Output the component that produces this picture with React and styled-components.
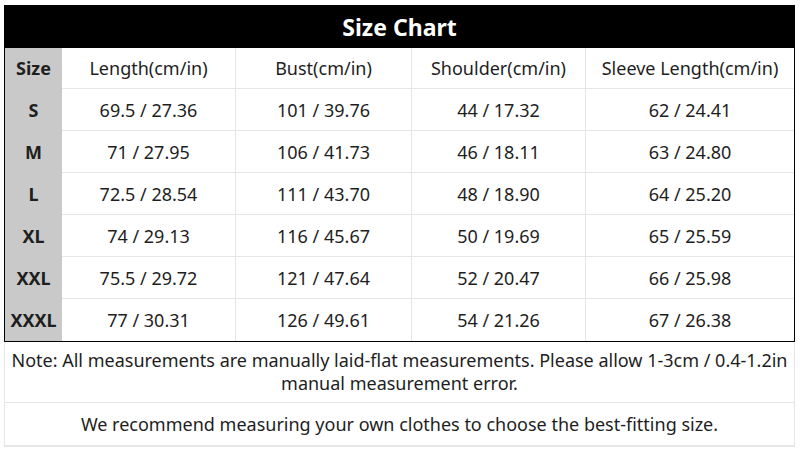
import styled, { createGlobalStyle } from 'styled-components'

const GlobalStyle = createGlobalStyle`
  html, body {
    margin: 0;
    padding: 0;
    background: #fff;
  }
  body {
    font-family: "Noto Sans", "Open Sans", Arial, sans-serif;
    color: #1e1e1e;
  }
`

const Page = styled.div`
  width: 800px;
  height: 449px;
  padding: 5px 0 0 4px;
  box-sizing: border-box;
`

const Chart = styled.div`
  width: 791px;
  border: 1px solid #000;
  border-top: none;
  box-sizing: border-box;
`

const Title = styled.div`
  height: 43px;
  background: #000;
  color: #fff;
  font-weight: 700;
  font-size: 23px;
  display: flex;
  align-items: center;
  justify-content: center;
`

const Grid = styled.div`
  display: grid;
  grid-template-columns: 57px 174px 176px 174px 208px;
  grid-template-rows: 41px repeat(6, 42px);
`

const Cell = styled.div`
  display: flex;
  align-items: center;
  justify-content: center;
  font-size: 18px;
  white-space: nowrap;
  box-sizing: border-box;
  border-right: ${p => (p.$last ? 'none' : '1px solid #e6e6e6')};
  border-bottom: ${p => (p.$bottom ? 'none' : '1px solid #e6e6e6')};
  background: #fff;
`

const SizeCell = styled(Cell)`
  background: #c9c9c9;
  font-weight: 700;
  border-right: none;
  border-bottom: ${p => (p.$bottom ? 'none' : '1px solid #c9c9c9')};
`

const Notes = styled.div`
  width: 791px;
  border: 1px solid #e6e6e6;
  border-top: none;
  box-sizing: border-box;
`

const NoteRow = styled.div`
  height: ${p => p.$h}px;
  display: flex;
  align-items: center;
  justify-content: center;
  text-align: center;
  font-size: 18px;
  line-height: 23px;
  padding: 0 4px;
  box-sizing: border-box;
  border-bottom: ${p => (p.$last ? 'none' : '1px solid #e6e6e6')};
`

const headers = ['Length(cm/in)', 'Bust(cm/in)', 'Shoulder(cm/in)', 'Sleeve Length(cm/in)']

const rows = [
  ['S', '69.5 / 27.36', '101 / 39.76', '44 / 17.32', '62 / 24.41'],
  ['M', '71 / 27.95', '106 / 41.73', '46 / 18.11', '63 / 24.80'],
  ['L', '72.5 / 28.54', '111 / 43.70', '48 / 18.90', '64 / 25.20'],
  ['XL', '74 / 29.13', '116 / 45.67', '50 / 19.69', '65 / 25.59'],
  ['XXL', '75.5 / 29.72', '121 / 47.64', '52 / 20.47', '66 / 25.98'],
  ['XXXL', '77 / 30.31', '126 / 49.61', '54 / 21.26', '67 / 26.38'],
]

function App() {
  return (
    <Page>
      <GlobalStyle />
      <Chart>
        <Title>Size Chart</Title>
        <Grid>
          <SizeCell>Size</SizeCell>
          {headers.map((h, i) => (
            <Cell key={h} $last={i === headers.length - 1}>{h}</Cell>
          ))}
          {rows.map((r, ri) => {
            const bottom = ri === rows.length - 1
            return [
              <SizeCell key={r[0]} $bottom={bottom}>{r[0]}</SizeCell>,
              ...r.slice(1).map((v, i) => (
                <Cell key={r[0] + i} $bottom={bottom} $last={i === 3}>{v}</Cell>
              )),
            ]
          })}
        </Grid>
      </Chart>
      <Notes>
        <NoteRow $h={61}>
          Note: All measurements are manually laid-flat measurements. Please allow 1-3cm / 0.4-1.2in
          <br />
          manual measurement error.
        </NoteRow>
        <NoteRow $h={43} $last={false}>
          We recommend measuring your own clothes to choose the best-fitting size.
        </NoteRow>
      </Notes>
    </Page>
  )
}

export default App
